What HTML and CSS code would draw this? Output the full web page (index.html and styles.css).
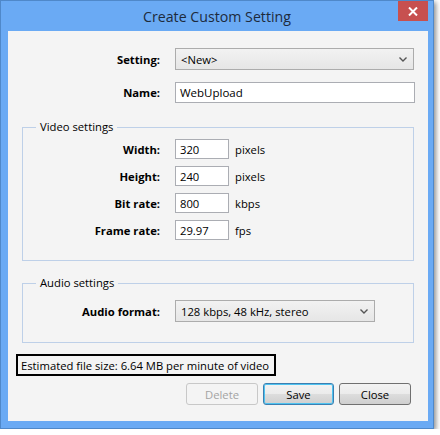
FILE: index.html
```html
<!DOCTYPE html>
<html>
<head>
<meta charset="utf-8">
<link rel="stylesheet" href="styles.css">
</head>
<body>
<div class="window">
  <div class="titlebar">
    <span class="spacer"></span>
    <span class="title">Create Custom Setting</span>
    <button class="close" aria-label="Close">
      <svg width="10" height="9" viewBox="0 0 10 9"><path d="M1 0.5 L9 8.5 M9 0.5 L1 8.5" stroke="#fff" stroke-width="2" fill="none"/></svg>
    </button>
  </div>
  <div class="client">
    <div class="top-grid">
      <label class="lbl">Setting:</label>
      <div class="select wide">
        <span>&lt;New&gt;</span>
        <svg class="chev" width="8" height="5" viewBox="0 0 8 5"><path d="M0.5 0.5 L4 4 L7.5 0.5" stroke="#555" stroke-width="1.4" fill="none"/></svg>
      </div>
      <label class="lbl">Name:</label>
      <div class="textbox name">WebUpload</div>
    </div>

    <fieldset class="group video">
      <legend>Video settings</legend>
      <div class="grid">
        <label class="lbl">Width:</label><div class="textbox small">320</div><span class="unit">pixels</span>
        <label class="lbl">Height:</label><div class="textbox small">240</div><span class="unit">pixels</span>
        <label class="lbl">Bit rate:</label><div class="textbox small">800</div><span class="unit">kbps</span>
        <label class="lbl">Frame rate:</label><div class="textbox small">29.97</div><span class="unit">fps</span>
      </div>
    </fieldset>

    <fieldset class="group audio">
      <legend>Audio settings</legend>
      <div class="grid">
        <label class="lbl">Audio format:</label>
        <div class="select audiosel">
          <span>128 kbps, 48 kHz, stereo</span>
          <svg class="chev" width="8" height="5" viewBox="0 0 8 5"><path d="M0.5 0.5 L4 4 L7.5 0.5" stroke="#555" stroke-width="1.4" fill="none"/></svg>
        </div>
      </div>
    </fieldset>

    <div class="estimate">Estimated file size: 6.64 MB per minute of video</div>

    <div class="buttons">
      <button class="btn disabled">Delete</button>
      <button class="btn default">Save</button>
      <button class="btn">Close</button>
    </div>
  </div>
</div>
</body>
</html>
```

FILE: styles.css
```css
html, body {
  margin: 0;
  padding: 0;
  background: #ffffff;
}

body {
  font-family: "Open Sans", "Noto Sans", sans-serif;
  font-size: 11.25px;
  color: #000;
}

.window {
  width: 432px;
  height: 427px;
  border: 1px solid #4f88c9;
  background: #6aaaf4;
  box-shadow: 2px 2px 5px rgba(0, 0, 0, 0.45);
}

.titlebar {
  height: 30px;
  display: grid;
  grid-template-columns: 1fr auto 1fr;
  align-items: start;
}

.title {
  font-size: 14.2px;
  line-height: 31px;
  color: #1d2a3c;
  white-space: nowrap;
}

.close {
  justify-self: end;
  margin: 0 5px 0 0;
  width: 30px;
  height: 20px;
  padding: 0;
  border: 0;
  background: #c7504f;
  display: flex;
  align-items: center;
  justify-content: center;
}

.client {
  margin-left: 7px;
  width: 420px;
  height: 390px;
  background: #f4f4f4;
  padding-top: 17px;
  box-sizing: border-box;
}

.lbl {
  font-weight: bold;
  text-align: right;
  white-space: nowrap;
}

.top-grid {
  display: grid;
  grid-template-columns: 152px auto;
  column-gap: 15px;
  row-gap: 12px;
  align-items: center;
}

.select {
  box-sizing: border-box;
  height: 22px;
  border: 1px solid #acacac;
  background: linear-gradient(#f2f2f2, #e6e6e6);
  display: flex;
  align-items: center;
  justify-content: space-between;
  padding: 0 6px 0 5px;
}

.select.wide {
  width: 239px;
}

.textbox {
  box-sizing: border-box;
  background: #fff;
  border: 1px solid #abadb3;
  display: flex;
  align-items: center;
  padding-left: 4px;
}

.textbox.name {
  width: 240px;
  height: 21px;
  font-size: 11.5px;
}

.textbox.small {
  width: 54px;
  height: 20px;
}

.group {
  margin: 0 14px;
  padding: 0;
  border: 1px solid #bed0e8;
}

.group legend {
  margin-left: 13px;
  padding: 0 4px;
  line-height: 16px;
}

.group.video {
  margin-top: 16px;
  padding: 4px 0 20px;
}

.group.audio {
  margin-top: 14px;
  padding: 9px 0 20px;
}

.group .grid {
  display: grid;
  grid-template-columns: 137px auto 1fr;
  column-gap: 15px;
  row-gap: 7px;
  align-items: center;
}

.group .unit {
  margin-left: -9px;
}

.audiosel {
  width: 200px;
}

.estimate {
  margin: 11px 0 0 8px;
  width: 260px;
  height: 22px;
  box-sizing: border-box;
  border: 2px solid #000;
  padding-left: 3px;
  display: flex;
  align-items: center;
  white-space: nowrap;
}

.buttons {
  margin-top: 7px;
  padding-right: 17px;
  display: flex;
  justify-content: flex-end;
  gap: 5px;
}

.btn {
  font-family: inherit;
  font-size: 11.25px;
  width: 72px;
  height: 22px;
  padding: 0;
  border: 1px solid #707070;
  border-radius: 3px;
  background: linear-gradient(#f3f3f3 0%, #ebebeb 50%, #dddddd 51%, #cfcfcf 100%);
  color: #000;
}

.btn.disabled {
  border-color: #c8c8c8;
  background: #f4f4f4;
  color: #a3a3a3;
}

.btn.default {
  width: 71px;
  border-color: #3c7fb1;
  box-shadow: inset 0 0 0 1px #4fc3f0;
}
```
